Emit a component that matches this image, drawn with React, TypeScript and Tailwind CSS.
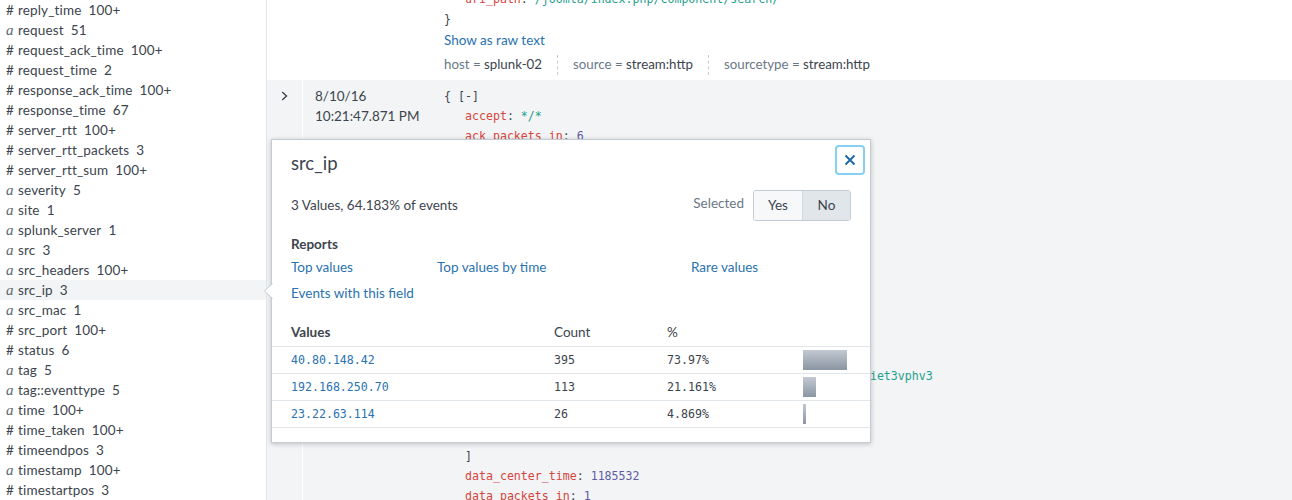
import React from "react";

const fields: [string, string, string][] = [
  ["#", "reply_time", "100+"],
  ["a", "request", "51"],
  ["#", "request_ack_time", "100+"],
  ["#", "request_time", "2"],
  ["#", "response_ack_time", "100+"],
  ["#", "response_time", "67"],
  ["#", "server_rtt", "100+"],
  ["#", "server_rtt_packets", "3"],
  ["#", "server_rtt_sum", "100+"],
  ["a", "severity", "5"],
  ["a", "site", "1"],
  ["a", "splunk_server", "1"],
  ["a", "src", "3"],
  ["a", "src_headers", "100+"],
  ["a", "src_ip", "3"],
  ["a", "src_mac", "1"],
  ["#", "src_port", "100+"],
  ["#", "status", "6"],
  ["a", "tag", "5"],
  ["a", "tag::eventtype", "5"],
  ["a", "time", "100+"],
  ["#", "time_taken", "100+"],
  ["#", "timeendpos", "3"],
  ["a", "timestamp", "100+"],
  ["#", "timestartpos", "3"],
];

type Tok = { t: string; c: "k" | "s" | "n" | "p" };
type Line = { indent: number; toks: Tok[] };

const K = (t: string): Tok => ({ t, c: "k" });
const S = (t: string): Tok => ({ t, c: "s" });
const N = (t: string): Tok => ({ t, c: "n" });
const P = (t: string): Tok => ({ t, c: "p" });

const jsonLines: Line[] = [
  { indent: 0, toks: [P("{ [-]")] },
  { indent: 1, toks: [K("accept"), P(": "), S("*/*")] },
  { indent: 1, toks: [K("ack_packets_in"), P(": "), N("6")] },
  { indent: 1, toks: [K("ack_packets_out"), P(": "), N("3")] },
  { indent: 1, toks: [K("bytes"), P(": "), N("1340")] },
  { indent: 1, toks: [K("bytes_in"), P(": "), N("490")] },
  { indent: 1, toks: [K("bytes_out"), P(": "), N("850")] },
  { indent: 1, toks: [K("c_ip"), P(": "), S("40.80.148.42")] },
  { indent: 1, toks: [K("cached"), P(": "), N("0")] },
  { indent: 1, toks: [K("capture_hostname"), P(": "), S("matar")] },
  { indent: 1, toks: [K("client_rtt"), P(": "), N("0")] },
  { indent: 1, toks: [K("client_rtt_packets"), P(": "), N("0")] },
  { indent: 1, toks: [K("client_rtt_sum"), P(": "), N("0")] },
  { indent: 1, toks: [K("cookie"), P(": [ [-]")] },
  { indent: 2, toks: [S("ae72c62a4936b238523950a4f26f67d0=v7ikb3m59romokqmbn2dhqiet3vphv3")] },
  { indent: 2, toks: [S("1bd5d4f3b1c9a0e7")] },
  { indent: 2, toks: [S("a3f1c09e")] },
  { indent: 2, toks: [S("b7e2d4")] },
  { indent: 1, toks: [P("]")] },
  { indent: 1, toks: [K("data_center_time"), P(": "), N("1185532")] },
  { indent: 1, toks: [K("data_packets_in"), P(": "), N("1")] },
  { indent: 1, toks: [K("data_packets_out"), P(": "), N("1")] },
];

const tokClass = (c: Tok["c"]) =>
  c === "k"
    ? "text-[#d6453d]"
    : c === "s"
    ? "text-[#1f9e8c]"
    : c === "n"
    ? "text-[#5f5ba6]"
    : "text-[#3c444d]";

const values = [
  { v: "40.80.148.42", c: "395", p: "73.97%", pct: 73.97 },
  { v: "192.168.250.70", c: "113", p: "21.161%", pct: 21.161 },
  { v: "23.22.63.114", c: "26", p: "4.869%", pct: 4.869 },
];

function FieldIcon({ kind }: { kind: string }) {
  if (kind === "a") {
    return (
      <span className="w-[12px] shrink-0 font-['Liberation_Serif',serif] italic text-[15px] leading-5 text-[#5c6773]">
        a
      </span>
    );
  }
  return <span className="w-[12px] shrink-0 text-[#3c444d]">#</span>;
}

function Sidebar() {
  return (
    <div className="w-[267px] shrink-0 border-r border-[#e1e6eb] bg-white h-full overflow-hidden">
      {fields.map(([k, name, count]) => (
        <div
          key={name}
          className={`flex items-center h-5 pl-[6px] text-[13.5px] tracking-[0.15px] text-[#3c444d] ${
            name === "src_ip" ? "bg-[#f2f4f5]" : ""
          }`}
        >
          <FieldIcon kind={k} />
          <span>{name}</span>
          <span className="ml-[7px]">{count}</span>
        </div>
      ))}
    </div>
  );
}

function Sep() {
  return <span className="mx-[15px] h-[20px] border-l border-dashed border-[#c3cbd4]" />;
}

function Main() {
  return (
    <div className="flex-1 min-w-0 flex flex-col h-full">
      <div className="h-[80px] shrink-0 bg-white overflow-hidden pl-[177px]">
        <div className="mt-[-11px] h-5 leading-5 pl-[21px] font-['DejaVu_Sans_Mono',monospace] text-[11.6px] whitespace-nowrap">
          <span className="text-[#d6453d]">uri_path</span>
          <span className="text-[#3c444d]">: </span>
          <span className="text-[#1f9e8c]">/joomla/index.php/component/search/</span>
        </div>
        <div className="h-5 leading-5 font-['DejaVu_Sans_Mono',monospace] text-[11.6px] text-[#3c444d]">
          {"}"}
        </div>
        <div className="h-5 leading-5 mt-[1px] text-[13.5px] text-[#2a72b0]">Show as raw text</div>
        <div className="flex items-center h-5 mt-[5px] text-[13.3px] whitespace-nowrap">
          <span className="text-[#6b7785]">host =&nbsp;</span>
          <span className="text-[#3c444d]">splunk-02</span>
          <Sep />
          <span className="text-[#6b7785]">source =&nbsp;</span>
          <span className="text-[#3c444d]">stream:http</span>
          <Sep />
          <span className="text-[#6b7785]">sourcetype =&nbsp;</span>
          <span className="text-[#3c444d]">stream:http</span>
        </div>
      </div>
      <div className="flex-1 min-h-0 bg-[#f2f4f5] flex overflow-hidden">
        <div className="w-[36px] shrink-0 border-r border-white pt-[6px] pl-[14px]">
          <div className="h-5 flex items-center">
            <svg width="7" height="10" viewBox="0 0 7 10">
              <path d="M1.2 1 L5.5 5 L1.2 9" fill="none" stroke="#3c444d" strokeWidth="1.4" />
            </svg>
          </div>
        </div>
        <div className="w-[141px] shrink-0 pl-[12px] pt-[6px] text-[13.5px] text-[#3c444d]">
          <div className="h-5 leading-5">8/10/16</div>
          <div className="h-5 leading-5">10:21:47.871 PM</div>
        </div>
        <div className="flex-1 min-w-0 pt-[6px] font-['DejaVu_Sans_Mono',monospace] text-[11.6px] whitespace-nowrap">
          {jsonLines.map((l, i) => (
            <div
              key={i}
              className={`h-5 leading-5 ${l.indent === 1 ? "pl-[21px]" : l.indent === 2 ? "pl-[42px]" : ""}`}
            >
              {l.toks.map((t, j) => (
                <span key={j} className={tokClass(t.c)}>
                  {t.t}
                </span>
              ))}
            </div>
          ))}
        </div>
      </div>
    </div>
  );
}

function Popup() {
  return (
    <div className="absolute left-[271px] top-[139px] w-[600px] h-[304px] bg-white border border-[#c3cbd4] shadow-[0_1px_5px_rgba(0,0,0,0.22)] text-[13.5px] text-[#3c444d]">
      <svg
        className="absolute left-[-9px] top-[143px]"
        width="10"
        height="16"
        viewBox="0 0 10 16"
      >
        <polygon points="10,0 1.5,8 10,16" fill="#ffffff" />
        <polyline points="9.5,0.5 1.5,8 9.5,15.5" fill="none" stroke="#c3cbd4" strokeWidth="1" />
      </svg>
      <button className="absolute right-[5px] top-[5px] w-[30px] h-[30px] rounded-[4px] border-2 border-[#86cff5] bg-white flex items-center justify-center">
        <svg width="12" height="12" viewBox="0 0 12 12">
          <path d="M1.5 1.5 L10.5 10.5 M10.5 1.5 L1.5 10.5" stroke="#1e6aa8" strokeWidth="2" />
        </svg>
      </button>
      <div className="px-[19px] pt-[11px]">
        <div className="text-[18.5px] leading-6">src_ip</div>
        <div className="flex items-center justify-between h-[31px] mt-[15px]">
          <span>3 Values, 64.183% of events</span>
          <div className="flex items-center">
            <span className="text-[#6b7785] mr-[9px] -mt-[5px]">Selected</span>
            <div className="flex border border-[#c3cbd4] rounded-[3px] overflow-hidden h-[31px]">
              <div className="w-[49px] flex items-center justify-center bg-[#f7f8fa] border-r border-[#d4dae0]">
                Yes
              </div>
              <div className="w-[47px] flex items-center justify-center bg-[#e1e6eb]">No</div>
            </div>
          </div>
        </div>
        <div className="h-5 leading-5 mt-[13px] font-bold">Reports</div>
        <div className="grid grid-cols-[146px_254px_1fr] h-5 leading-5 mt-[3px] text-[#2a72b0]">
          <span>Top values</span>
          <span>Top values by time</span>
          <span>Rare values</span>
        </div>
        <div className="h-5 leading-5 mt-[6px] text-[#2a72b0]">Events with this field</div>
      </div>
      <div className="mt-[15px]">
        <div className="grid grid-cols-[282px_113px_136px_1fr] h-[29px] pt-[1px] items-center border-b border-[#e1e6eb]">
          <span className="pl-[19px] font-bold">Values</span>
          <span>Count</span>
          <span>%</span>
          <span />
        </div>
        {values.map((r) => (
          <div
            key={r.v}
            className="grid grid-cols-[282px_113px_136px_1fr] h-[27px] items-center border-b border-[#e1e6eb] font-['DejaVu_Sans_Mono',monospace] text-[11.6px]"
          >
            <span className="pl-[19px] pt-[1px] text-[#2a72b0]">{r.v}</span>
            <span className="pt-[1px]">{r.c}</span>
            <span className="pt-[1px]">{r.p}</span>
            <span className="flex items-center">
              <span
                className="h-[20px] bg-linear-to-b from-[#c3c9d2] to-[#8b96a3]"
                style={{ width: Math.max(2, Math.round(r.pct * 0.595)) }}
              />
            </span>
          </div>
        ))}
      </div>
    </div>
  );
}

export default function App() {
  return (
    <div className="relative w-[1292px] h-[500px] overflow-hidden flex bg-white font-['Lato','Open_Sans',sans-serif]">
      <Sidebar />
      <Main />
      <Popup />
    </div>
  );
}
